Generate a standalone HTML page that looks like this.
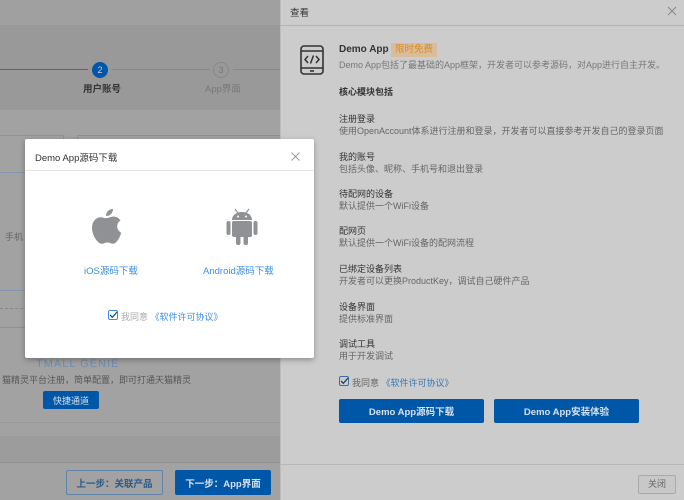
<!DOCTYPE html>
<html><head><meta charset="utf-8"><style>
*{margin:0;padding:0;box-sizing:border-box}
body{width:684px;height:500px;overflow:hidden;position:relative;background:#a2a2a2;font-family:"Liberation Sans","Noto Sans CJK SC",sans-serif;font-size:9px;color:#444}
.a{position:absolute;white-space:nowrap}
.btn{position:absolute;background:#0057a8;color:#d8e2ee;font-weight:bold;display:flex;align-items:center;justify-content:center;border-radius:2px}
.t{color:#333;font-size:9px}
.d{color:#666;font-size:9px}
</style></head><body>
<!-- left background -->
<div class="a" style="left:0;top:0;width:280px;height:25px;background:#a0a0a0"></div>
<div class="a" style="left:0;top:25px;width:280px;height:85px;background:#999"></div>
<div class="a" style="left:0;top:69px;width:88px;height:1px;background:#3f6f9e"></div>
<div class="a" style="left:112px;top:69px;width:98px;height:1px;background:#888"></div>
<div class="a" style="left:233px;top:69px;width:47px;height:1px;background:#888"></div>
<div class="a" style="left:92px;top:62px;width:16px;height:16px;border-radius:50%;background:#0057a8;color:#ccd;font-size:9px;text-align:center;line-height:16px">2</div>
<div class="a" style="left:213px;top:62px;width:16px;height:16px;border-radius:50%;border:1px solid #888;color:#777;font-size:9px;text-align:center;line-height:14px">3</div>
<div class="a" style="left:83px;top:81px;font-size:9.5px;font-weight:bold;color:#333">用户账号</div>
<div class="a" style="left:205px;top:81px;font-size:9.5px;color:#777">App界面</div>
<div class="a" style="left:0;top:135px;width:64px;height:38px;border:1px solid #7e97b0;border-left:none"></div>
<div class="a" style="left:77px;top:135px;width:203px;height:38px;border:1px solid #909090;border-right:none"></div>
<div class="a" style="left:5px;top:230px;color:#666">手机</div>
<div class="a" style="left:0;top:290px;width:280px;height:1px;background:#7e97b0"></div>
<div class="a" style="left:0;top:308px;width:280px;border-top:1px dashed #888"></div>
<div class="a" style="left:0;top:327px;width:280px;height:1px;background:#909090"></div>
<div class="a" style="left:36px;top:358px;font-size:11px;color:#6f8db0;letter-spacing:1px">TMALL GENIE</div>
<div class="a" style="left:2px;top:373px;color:#555">猫精灵平台注册，简单配置，即可打通天猫精灵</div>
<div class="btn" style="left:43px;top:391px;width:56px;height:18px;font-weight:normal">快捷通道</div>
<div class="a" style="left:0;top:422px;width:280px;height:1px;background:#999"></div>
<div class="a" style="left:0;top:436px;width:280px;height:26px;background:#9c9c9c"></div>
<div class="a" style="left:0;top:462px;width:280px;height:1px;background:#929292"></div>
<div class="a" style="left:66px;top:470px;width:97px;height:25px;border:1px solid #5f84aa;border-radius:2px;color:#2c5a8a;font-weight:bold;font-size:9.5px;display:flex;align-items:center;justify-content:center">上一步：关联产品</div>
<div class="btn" style="left:175px;top:470px;width:96px;height:25px;font-size:9.5px">下一步：App界面</div>

<!-- right panel -->
<div class="a" style="left:280px;top:0;width:404px;height:500px;background:#cccccc;border-left:1px solid #bdbdbd"></div>
<div class="a" style="left:280px;top:25px;width:404px;height:1px;background:#b4b4b4"></div>
<div class="a" style="left:290px;top:5px;font-size:9.5px;color:#333">查看</div>
<svg class="a" style="left:667px;top:6px" width="10" height="10"><path d="M1 1L9 9M9 1L1 9" stroke="#888" stroke-width="1"/></svg>
<svg class="a" style="left:300px;top:45px" width="24" height="30" viewBox="0 0 24 30"><rect x="1" y="1" width="22" height="28" rx="3" fill="none" stroke="#333" stroke-width="1.6"/><line x1="1" y1="6" x2="23" y2="6" stroke="#333" stroke-width="1.4"/><line x1="1" y1="23" x2="23" y2="23" stroke="#333" stroke-width="1.4"/><line x1="10" y1="26" x2="14" y2="26" stroke="#333" stroke-width="1.6"/><path d="M8 11L5 14.5L8 18M16 11L19 14.5L16 18M13.5 10.5L10.5 18.5" fill="none" stroke="#333" stroke-width="1.5"/></svg>
<div class="a" style="left:339px;top:44px;font-size:10px;font-weight:bold;color:#333">Demo App</div>
<div class="a" style="left:391px;top:43px;width:46px;height:14px;background:#d7bd9b;color:#e08a1e;font-size:9.5px;text-align:center;line-height:14px">限时免费</div>
<div class="a" style="left:339px;top:58px;color:#777">Demo App包括了最基础的App框架，开发者可以参考源码，对App进行自主开发。</div>
<div class="a" style="left:339px;top:85px;font-weight:bold;color:#333">核心模块包括</div>
<div class="a t" style="left:339px;top:112px">注册登录</div><div class="a d" style="left:339px;top:124px">使用OpenAccount体系进行注册和登录，开发者可以直接参考开发自己的登录页面</div>
<div class="a t" style="left:339px;top:150px">我的账号</div><div class="a d" style="left:339px;top:162px">包括头像、昵称、手机号和退出登录</div>
<div class="a t" style="left:339px;top:187px">待配网的设备</div><div class="a d" style="left:339px;top:199px">默认提供一个WiFi设备</div>
<div class="a t" style="left:339px;top:224px">配网页</div><div class="a d" style="left:339px;top:236px">默认提供一个WiFi设备的配网流程</div>
<div class="a t" style="left:339px;top:262px">已绑定设备列表</div><div class="a d" style="left:339px;top:274px">开发者可以更换ProductKey，调试自己硬件产品</div>
<div class="a t" style="left:339px;top:300px">设备界面</div><div class="a d" style="left:339px;top:312px">提供标准界面</div>
<div class="a t" style="left:339px;top:337px">调试工具</div><div class="a d" style="left:339px;top:349px">用于开发调试</div>
<svg class="a" style="left:339px;top:376px" width="10" height="10"><rect x="0.5" y="0.5" width="9" height="9" rx="1.5" fill="none" stroke="#3a6ea5"/><path d="M2 5L4.3 7.3L9 2" fill="none" stroke="#1f3f66" stroke-width="1.3"/></svg>
<div class="a" style="left:352px;top:376px;color:#666">我同意 <span style="color:#3a77b5">《软件许可协议》</span></div>
<div class="btn" style="left:339px;top:399px;width:145px;height:24px;font-size:9.5px">Demo App源码下载</div>
<div class="btn" style="left:494px;top:399px;width:145px;height:24px;font-size:9.5px">Demo App安装体验</div>
<div class="a" style="left:280px;top:464px;width:404px;height:1px;background:#b8b8b8"></div>
<div class="a" style="left:638px;top:475px;width:38px;height:19px;border:1px solid #aaa;background:#c8c8c8;color:#666;font-size:9px;text-align:center;line-height:17px;border-radius:2px">关闭</div>

<!-- modal -->
<div class="a" style="left:25px;top:139px;width:289px;height:219px;background:#fff;border-radius:2px;box-shadow:0 2px 6px rgba(0,0,0,.3)"></div>
<div class="a" style="left:25px;top:170px;width:289px;height:1px;background:#e4e4e4"></div>
<div class="a" style="left:35px;top:150px;font-size:9.5px;color:#333">Demo App源码下载</div>
<svg class="a" style="left:291px;top:152px" width="9" height="9"><path d="M0.5 0.5L8.5 8.5M8.5 0.5L0.5 8.5" stroke="#999" stroke-width="1"/></svg>
<svg class="a" style="left:91px;top:208px" width="32" height="37" viewBox="0 0 32 37"><path d="M22 1c0 4-3 7-7 7 0-4 3-7 7-7z" fill="#8f9194"/><path d="M16 10c2 0 4-1.5 6.5-1.5 3 0 5.5 1.5 7 4-3.5 2-4 6-2.5 9 .8 1.6 2 2.8 3.3 3.3-1.3 4-4.5 11-8.3 11-2 0-3-1.3-5.5-1.3s-3.6 1.3-5.5 1.3C6.5 35.8 1 27 1 20c0-7 4.5-10.8 8.5-10.8 2.5 0 4.6 1.5 6.5 0.8z" fill="#8f9194"/></svg>
<svg class="a" style="left:226px;top:208px" width="32" height="37" viewBox="0 0 32 37"><path d="M9 1l3 4M23 1l-3 4" stroke="#8f9194" stroke-width="1.2"/><path d="M6 12c0-5 4.5-8 10-8s10 3 10 8z" fill="#8f9194"/><circle cx="12" cy="8.5" r="1" fill="#fff"/><circle cx="20" cy="8.5" r="1" fill="#fff"/><rect x="6" y="13" width="20" height="16" rx="2" fill="#8f9194"/><rect x="0.5" y="13" width="4" height="14" rx="2" fill="#8f9194"/><rect x="27.5" y="13" width="4" height="14" rx="2" fill="#8f9194"/><rect x="10" y="27" width="4.5" height="10" rx="2" fill="#8f9194"/><rect x="17.5" y="27" width="4.5" height="10" rx="2" fill="#8f9194"/></svg>
<div class="a" style="left:84px;top:263px;color:#3a8ee6;font-size:9.5px">iOS源码下载</div>
<div class="a" style="left:203px;top:263px;color:#3a8ee6;font-size:9.5px">Android源码下载</div>
<svg class="a" style="left:108px;top:310px" width="10" height="10"><rect x="0.5" y="0.5" width="9" height="9" rx="1.5" fill="none" stroke="#3a8ee6"/><path d="M2 5L4.3 7.3L9 2" fill="none" stroke="#1f4f86" stroke-width="1.3"/></svg>
<div class="a" style="left:121px;top:310px;color:#aaa">我同意 <span style="color:#3a8ee6">《软件许可协议》</span></div>
</body></html>
